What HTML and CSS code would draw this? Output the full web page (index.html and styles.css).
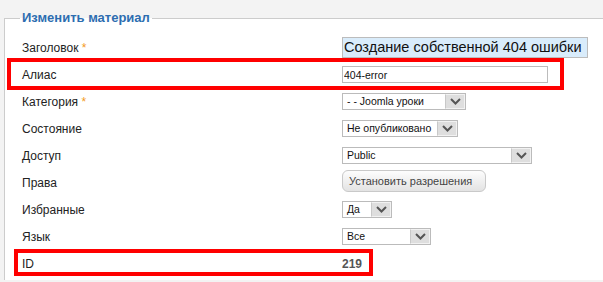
FILE: index.html
```html
<!DOCTYPE html>
<html lang="ru">
<head>
<meta charset="utf-8">
<title>Изменить материал</title>
<link rel="stylesheet" href="styles.css">
</head>
<body>
<fieldset class="panel">
  <legend class="legend">Изменить материал</legend>

  <div class="row">
    <label class="label">Заголовок <span class="req">*</span></label>
    <div class="ctl"><input class="title-input" type="text" value="Создание собственной 404 ошибки"></div>
  </div>

  <div class="row marked marked-alias">
    <label class="label">Алиас</label>
    <div class="ctl"><input class="alias-input" type="text" value="404-error"></div>
  </div>

  <div class="row">
    <label class="label">Категория <span class="req">*</span></label>
    <div class="ctl">
      <div class="sel sel-cat"><span class="sel-text">- - Joomla уроки</span><span class="sel-arrow"><svg width="11" height="7" viewBox="0 0 11 7"><path d="M1 1 L5.5 5.5 L10 1" fill="none" stroke="#555" stroke-width="2"/></svg></span></div>
    </div>
  </div>

  <div class="row">
    <label class="label">Состояние</label>
    <div class="ctl">
      <div class="sel sel-state"><span class="sel-text">Не опубликовано</span><span class="sel-arrow"><svg width="11" height="7" viewBox="0 0 11 7"><path d="M1 1 L5.5 5.5 L10 1" fill="none" stroke="#555" stroke-width="2"/></svg></span></div>
    </div>
  </div>

  <div class="row">
    <label class="label">Доступ</label>
    <div class="ctl">
      <div class="sel sel-access"><span class="sel-text">Public</span><span class="sel-arrow"><svg width="11" height="7" viewBox="0 0 11 7"><path d="M1 1 L5.5 5.5 L10 1" fill="none" stroke="#555" stroke-width="2"/></svg></span></div>
    </div>
  </div>

  <div class="row">
    <label class="label">Права</label>
    <div class="ctl"><button class="btn" type="button">Установить разрешения</button></div>
  </div>

  <div class="row">
    <label class="label">Избранные</label>
    <div class="ctl">
      <div class="sel sel-fav"><span class="sel-text">Да</span><span class="sel-arrow"><svg width="11" height="7" viewBox="0 0 11 7"><path d="M1 1 L5.5 5.5 L10 1" fill="none" stroke="#555" stroke-width="2"/></svg></span></div>
    </div>
  </div>

  <div class="row">
    <label class="label">Язык</label>
    <div class="ctl">
      <div class="sel sel-lang"><span class="sel-text">Все</span><span class="sel-arrow"><svg width="11" height="7" viewBox="0 0 11 7"><path d="M1 1 L5.5 5.5 L10 1" fill="none" stroke="#555" stroke-width="2"/></svg></span></div>
    </div>
  </div>

  <div class="row marked marked-id">
    <label class="label">ID</label>
    <div class="ctl"><span class="id-val">219</span></div>
  </div>
</fieldset>
</body>
</html>
```

FILE: styles.css
```css
html, body {
  margin: 0;
  padding: 0;
}
body {
  background: #f3f3f3;
  font-family: "Liberation Sans", Arial, sans-serif;
  color: #222;
  overflow: hidden;
  width: 603px;
  height: 282px;
}
.panel {
  margin: 10px 0 0 4px;
  width: 599px;
  border: 1px solid #cccccc;
  border-right: 0;
  border-bottom: 0;
  padding: 8px 0 3px 15px;
  background: #fff;
  box-sizing: border-box;
}
.legend {
  padding: 0 2px;
  font-size: 13px;
  line-height: 16px;
  font-weight: bold;
  color: #2d6db0;
}
.row {
  display: grid;
  grid-template-columns: 320px auto;
  align-items: center;
  height: 27px;
  padding-left: 2px;
  position: relative;
}
.label {
  font-size: 12px;
  line-height: 14px;
  color: #222;
}
.req {
  color: #f39a1e;
}
.ctl {
  display: flex;
  align-items: center;
}
.title-input {
  box-sizing: border-box;
  width: 246px;
  height: 21px;
  margin: 0 0 1px 0;
  border: 1px solid #bcbcbc;
  background: #d9ecfb;
  padding: 0 1px;
  font-family: "Liberation Sans", Arial, sans-serif;
  font-size: 14.5px;
  color: #111;
  outline: none;
}
.alias-input {
  box-sizing: border-box;
  width: 206px;
  height: 17px;
  border: 1px solid #bcbcbc;
  background: #fff;
  padding: 0 1px;
  font-family: "Liberation Sans", Arial, sans-serif;
  font-size: 10.5px;
  color: #111;
  outline: none;
}
.sel {
  box-sizing: border-box;
  display: flex;
  height: 17px;
  border: 1px solid #bbbbbb;
  background: #fff;
}
.sel-text {
  flex: 1;
  padding-left: 4px;
  font-size: 10.5px;
  line-height: 15px;
  color: #111;
  white-space: nowrap;
  overflow: hidden;
}
.sel-arrow {
  width: 20px;
  flex: none;
  box-sizing: border-box;
  border: 1px solid #f2f2f2;
  border-left-color: #c8c8c8;
  background: #dedede;
  display: flex;
  align-items: center;
  justify-content: center;
}
.sel-cat { width: 124px; }
.sel-state { width: 116px; }
.sel-access { width: 190px; }
.sel-fav { width: 50px; }
.sel-lang { width: 89px; }
.btn {
  box-sizing: border-box;
  width: 144px;
  height: 22px;
  margin-bottom: 3px;
  border: 1px solid #c9c9c9;
  border-radius: 6px;
  background: linear-gradient(#fdfdfd, #e3e3e3);
  padding: 0 0 0 6px;
  text-align: left;
  font-family: "Liberation Sans", Arial, sans-serif;
  font-size: 11px;
  color: #444;
}
.id-val {
  font-size: 12px;
  font-weight: bold;
  color: #555;
}
.marked::after {
  content: "";
  position: absolute;
  border: 4px solid #ff0000;
  box-sizing: border-box;
  pointer-events: none;
}
.marked-alias::after {
  top: -3px;
  left: -13px;
  width: 557px;
  height: 32px;
}
.marked-id::after {
  top: -1px;
  left: -6px;
  width: 359px;
  height: 27px;
}
```
